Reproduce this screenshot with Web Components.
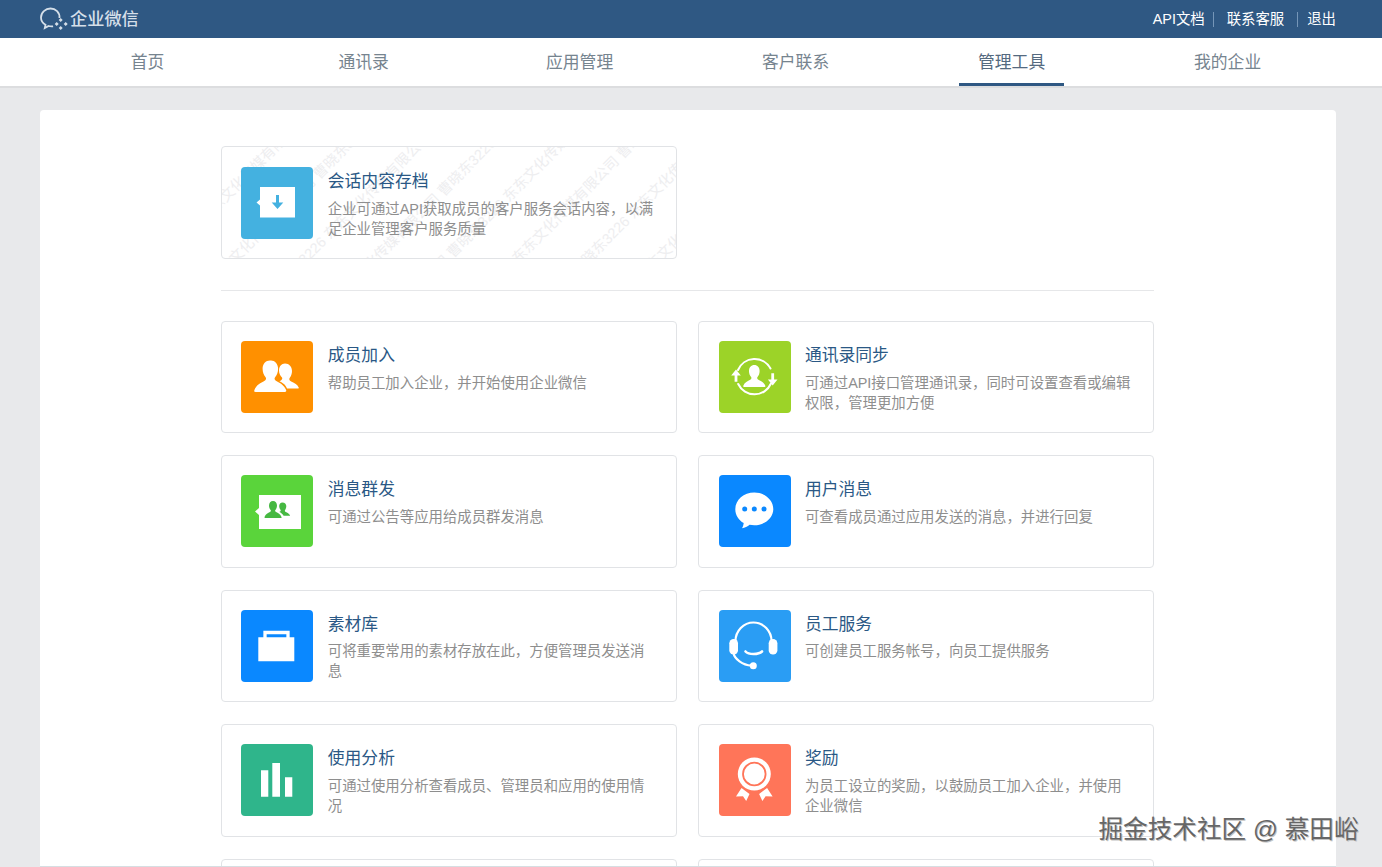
<!DOCTYPE html>
<html lang="zh-CN">
<head>
<meta charset="utf-8">
<title>企业微信</title>
<style>
html,body{margin:0;padding:0;height:867px;overflow:hidden}
body{display:flex;flex-direction:column;background:#e8e9eb;font-family:"Liberation Sans","Noto Sans CJK SC",sans-serif;position:relative}
</style>
</head>
<body>
<wx-topbar></wx-topbar>
<wx-nav active="管理工具" items="首页,通讯录,应用管理,客户联系,管理工具,我的企业"></wx-nav>
<wx-main>
  <wx-grid>
    <wx-card icon="archive" name="会话内容存档" marked>企业可通过API获取成员的客户服务会话内容，以满足企业管理客户服务质量</wx-card>
  </wx-grid>
  <wx-divider></wx-divider>
  <wx-grid>
    <wx-card icon="join" name="成员加入">帮助员工加入企业，并开始使用企业微信</wx-card>
    <wx-card icon="sync" name="通讯录同步">可通过API接口管理通讯录，同时可设置查看或编辑权限，管理更加方便</wx-card>
    <wx-card icon="mass" name="消息群发">可通过公告等应用给成员群发消息</wx-card>
    <wx-card icon="chat" name="用户消息">可查看成员通过应用发送的消息，并进行回复</wx-card>
    <wx-card icon="case" name="素材库">可将重要常用的素材存放在此，方便管理员发送消息</wx-card>
    <wx-card icon="service" name="员工服务">可创建员工服务帐号，向员工提供服务</wx-card>
    <wx-card icon="stats" name="使用分析">可通过使用分析查看成员、管理员和应用的使用情况</wx-card>
    <wx-card icon="award" name="奖励">为员工设立的奖励，以鼓励员工加入企业，并使用企业微信</wx-card>
    <wx-card></wx-card>
    <wx-card></wx-card>
  </wx-grid>
</wx-main>
<wx-credit>掘金技术社区 @ 慕田峪</wx-credit>
<script>
const PERSON='M35.300 20.500c-3.300 0-5.600 2.600-5.600 6.300 0 2.700.9 4.700 2.200 6.300.8 1 .3 2.200-.9 2.900-2.500 1.300-6 2.800-7.300 6.400-.3.700 0 1.200.9 1.200h21.400c.9 0 1.200-.5.900-1.200-1.300-3.600-4.800-5.100-7.300-6.400-1.200-.7-1.700-1.900-.9-2.900 1.300-1.600 2.200-3.600 2.200-6.300 0-3.700-2.300-6.300-5.600-6.300z';
const ICONS={
archive:{c:'#44b1e0',s:`<path fill="#fff" d="M19 20h35v30.500H19V38.500l-3.500-3 3.500-3z"/><path fill="#44b1e0" d="M35 28h3v7.500h4.300l-5.800 6.500-5.800-6.500H35z"/>`},
join:{c:'#ff9000',s:`<path fill="#fff" d="M44 22.500c-3.600 0-6 3-6 6.800 0 3 1 5.500 3 7.300.8 1-.2 2.500-1.500 3.200l-1 .5c2.300 1.100 6 3 7.500 7.200H57c.6 0 .9-.5.700-1.100-1.300-2.900-5-4.400-7.500-5.800-1.700-1-2.500-2.400-1.400-3.900 1.500-1.900 2.200-4.300 2.200-6.800 0-4-2.800-7.400-7-7.400z"/><path fill="#fff" d="M29 19.500c-4.300 0-7.400 3.400-7.400 8.300 0 3.500 1.200 6.300 3 8.400 1 1.300.3 3-1.300 3.900-3.300 1.800-8 3.800-9.900 9-.4 1.200.2 1.900 1.200 1.900h29.300c1.200 0 1.700-.8 1.200-1.900-2-5-6.500-7.200-9.800-9-1.600-.9-2.300-2.600-1.200-3.900 1.800-2.200 3-5 3-8.400 0-4.900-3.400-8.300-7.100-8.300z"/>`},
sync:{c:'#9cd328',s:`<g fill="none" stroke="#fff" stroke-width="2" stroke-linecap="round"><path d="M19 29a18 18 0 0 1 32.500-1.500"/><path d="M52 42.500a18 18 0 0 1-32.800.5"/></g><path fill="#fff" d="M17 28.500l4.800 6h-3.400v6.300h-2.800v-6.300h-3.400zM53.700 44.500l-4.800-6h3.400v-6.300h2.800v6.300h3.400z"/><path fill="#fff" transform="translate(35.300 24) scale(.95) translate(-35.300 -20.500)" d="${PERSON}"/>`},
mass:{c:'#5ad43b',s:`<path fill="#fff" d="M18 20h42v34H18V40l-4-3.500 4-3.500z"/><path fill="#46b842" d="M41.500 27.500c-2 0-3.300 1.600-3.300 3.600 0 1.500.5 2.800 1.300 3.700.5.600.1 1.400-.5 1.800l-.6.300c1.300.6 3.300 1.800 4.200 3.900h6c.4 0 .5-.3.400-.6-.8-1.600-2.800-2.400-4.200-3.200-.9-.5-1.300-1.300-.7-2.100.8-1 1.200-2.400 1.200-3.800 0-2-1.500-3.600-3.800-3.600z"/><path fill="#46b842" d="M32 26c-2.400 0-4 1.900-4 4.500 0 1.900.6 3.400 1.600 4.500.6.700.2 1.600-.7 2.100-1.800 1-4.300 2-5.400 4.900-.2.600.1 1 .7 1h15.600c.7 0 .9-.4.700-1-1.100-2.900-3.600-3.900-5.400-4.900-.9-.5-1.300-1.400-.7-2.100 1-1.100 1.600-2.600 1.600-4.500 0-2.600-1.600-4.500-4-4.500z"/>`},
chat:{c:'#0a88ff',s:`<path fill="#fff" d="M35.300 17.500c-10.500 0-19 7.400-19 16.700 0 5.800 3.400 10.900 8.400 13.900-.2 1.700-.7 3.700-1.700 5.100 2.600-.3 5.700-1.800 7.600-3.500 1.500.3 3.100.5 4.700.5 10.500 0 19-7.400 19-16 0-9.300-8.500-16.700-19-16.700z"/><g fill="#0a88ff"><circle cx="25.700" cy="34" r="2.500"/><circle cx="35.300" cy="34" r="2.500"/><circle cx="45" cy="34" r="2.500"/></g>`},
case:{c:'#0a88ff',s:`<path fill="#fff" d="M17.300 27.300h36v24h-36z"/><path fill="none" stroke="#fff" stroke-width="3.300" d="M24 28V22.500h23V28"/>`},
service:{c:'#2a9df4',s:`<g fill="none" stroke="#fff" stroke-linecap="round"><path stroke-width="2.200" d="M16.500 31c0-10 8-18.500 18-18.500S52.500 21 52.500 31"/><path stroke-width="2.200" d="M14.500 43c1 6 9 12 18 12.700"/><path stroke-width="2.600" d="M26.500 41.500c3 3.300 13 3.300 16.500 0"/></g><rect x="10.300" y="29" width="8.700" height="15.500" rx="4.300" fill="#fff"/><rect x="49.700" y="29" width="8.700" height="15.500" rx="4.300" fill="#fff"/><circle cx="34.300" cy="55.700" r="3.500" fill="#fff"/>`},
stats:{c:'#2fb58b',s:`<path fill="#fff" d="M20 26.300h7.300v26.400H20zM31.300 19H39v33.700h-7.700zM44 33.300h7.300v19.400H44z"/>`},
award:{c:'#ff7559',s:`<circle cx="35.300" cy="30" r="16.500" fill="#fff"/><circle cx="35.300" cy="30" r="11.300" fill="#fff" stroke="#ff7559" stroke-width="1.800"/><path fill="#fff" d="M22.500 44l8 6-3.300 7-3.200-4.700-7 .2zM48.100 44l-8 6 3.300 7 3.200-4.700 7 .2z"/>`}
};

class WxTopbar extends HTMLElement{
  constructor(){super();this.attachShadow({mode:'open'}).innerHTML=`<style>
  :host{display:flex;flex:none;height:38px;background:#2f5883;align-items:center;padding:0 46px 0 40px;color:#fff;box-sizing:border-box;font-size:14.400px}
  .logo{display:flex;align-items:center;gap:2px;color:#d5dfe9;font-size:17.200px;font-weight:500;line-height:38px}
  svg{display:block;width:28px;height:24px}
  nav{margin-left:auto;display:flex;align-items:center}
  a{color:#fff;line-height:20px}
  i{display:block;width:1px;height:15px;background:#7596b8}
  .a{margin-right:8.500px}.b{margin-left:12.400px;margin-right:13px}.c{margin-left:9px}
  </style>
  <div class="logo"><svg viewBox="0 0 28 24" fill="none" stroke="#d5dfe9" stroke-width="1.800"><path d="M19.500 11C20 5.500 15.500 1.500 10.500 1.500S1 5.500 1 10.500c0 3 1.500 5.500 4.500 7.200l-.7 3.300 3.800-2c1.500.4 3 .5 4.500.3"/><path d="M20.700 11l2 2-2 2-2-2zM16.700 15l2 2-2 2-2-2zM25.700 15l2 2-2 2-2-2zM20.700 19l2 2-2 2-2-2z" fill="#d5dfe9" stroke="none"/></svg><span>企业微信</span></div>
  <nav><a class="a">API文档</a><i></i><a class="b">联系客服</a><i></i><a class="c">退出</a></nav>`}
}
class WxNav extends HTMLElement{
  connectedCallback(){
    const act=this.getAttribute('active');
    const items=this.getAttribute('items').split(',').map(t=>`<a class="${t===act?'on':''}"><span>${t}</span></a>`).join('');
    this.attachShadow({mode:'open'}).innerHTML=`<style>
    :host{display:flex;flex:none;height:48px;padding:0 46px 0 40px;background:#fff;border-bottom:2px solid #dcdddf;box-sizing:content-box}
    a{flex:none;width:216px;display:flex;justify-content:center;font-size:16.800px;color:#76848f;line-height:49px}
    span{display:block;height:48px;padding:0 18.900px;box-sizing:border-box;position:relative;left:-.4px}
    .on{color:#556a80}.on span{border-bottom:3px solid #2f5883}
    </style>${items}`;
  }
}
class WxMain extends HTMLElement{
  constructor(){super();this.attachShadow({mode:'open'}).innerHTML=`<style>
  :host{display:block;flex:1;min-height:0;overflow:hidden;margin:22px 46px 0 40px;padding:36px 0 0 181px;background:#fff;border-radius:4px 4px 0 0;border-bottom:1px solid #d6dee2;box-sizing:border-box}
  </style><slot></slot>`}
}
class WxGrid extends HTMLElement{
  constructor(){super();this.attachShadow({mode:'open'}).innerHTML=`<style>
  :host{display:grid;grid-template-columns:456px 455.800px;column-gap:21.200px;row-gap:22px;width:933px}
  </style><slot></slot>`}
}
class WxDivider extends HTMLElement{
  constructor(){super();this.attachShadow({mode:'open'}).innerHTML=`<style>
  :host{display:block;width:933px;height:1px;background:#e6e7e9;margin:31px 0 30px}
  </style>`}
}
class WxCard extends HTMLElement{
  connectedCallback(){
    const k=this.getAttribute('icon');const ic=ICONS[k];
    const wm=this.hasAttribute('marked')?'<wx-watermark></wx-watermark>':'';
    this.attachShadow({mode:'open'}).innerHTML=`<style>
    :host{display:flex;position:relative;overflow:hidden;height:112.400px;box-sizing:border-box;border:1px solid #e1e3e6;border-radius:4px;padding:19px 19px 0 19.400px;gap:14.400px;background:#fff}
    :host([marked]){height:113px;padding-top:20px}
    svg{flex:none;display:block;width:72px;height:72px;border-radius:4px}
    .t{flex:1;min-width:0;position:relative}
    h3{margin:3.100px 0 0;font-weight:400;font-size:16.800px;line-height:24px;color:#2a5885}
    p{margin:4.500px 0 0;font-size:14.400px;line-height:20px;color:#8e8e8e}
    </style>${wm}${ic?`<svg viewBox="0 0 72 72" style="position:relative"><rect width="72" height="72" fill="${ic.c}"/>${ic.s}</svg><div class="t"><h3>${this.getAttribute('name')}</h3><p><slot></slot></p></div>`:''}`;
  }
}
class WxWatermark extends HTMLElement{
  constructor(){super();
    const line='东东文化传媒有限公司 曹晓东3226 '.repeat(5);
    let rows='';
    for(let i=0;i<14;i++)rows+=`<div style="margin-left:${-(i*37)%150}px">${line}</div>`;
    this.attachShadow({mode:'open'}).innerHTML=`<style>
    :host{display:block;position:absolute;left:-300px;top:-300px;width:1100px;height:700px;transform:rotate(-45deg);pointer-events:none}
    div{white-space:nowrap;font-size:14.400px;line-height:50px;color:#eeeef0}
    </style>${rows}`}
}
class WxCredit extends HTMLElement{
  constructor(){super();this.attachShadow({mode:'open'}).innerHTML=`<style>
  :host{display:block;position:absolute;left:1098.500px;top:812px;font-size:24.600px;line-height:36px;white-space:nowrap;color:#666;text-shadow:1px 1px 0 #c4c4c4}
  </style><slot></slot>`}
}
customElements.define('wx-topbar',WxTopbar);
customElements.define('wx-nav',WxNav);
customElements.define('wx-main',WxMain);
customElements.define('wx-grid',WxGrid);
customElements.define('wx-divider',WxDivider);
customElements.define('wx-watermark',WxWatermark);
customElements.define('wx-card',WxCard);
customElements.define('wx-credit',WxCredit);
</script>
</body>
</html>
